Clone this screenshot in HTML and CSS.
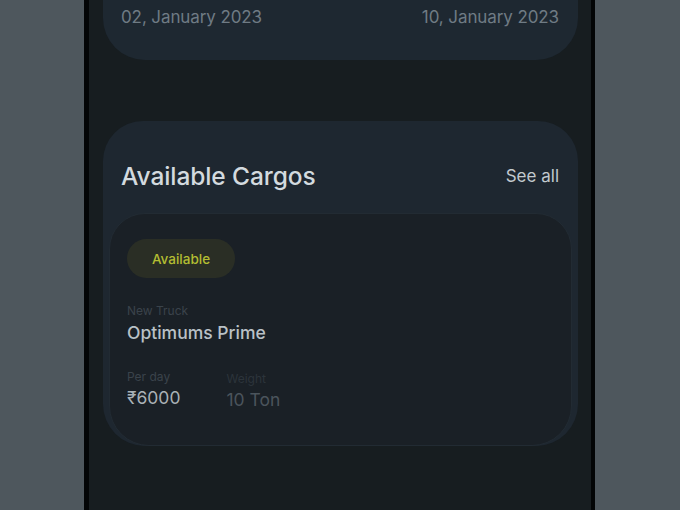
FILE: index.html
```html
<!DOCTYPE html>
<html>
<head>
<meta charset="utf-8">
<link rel="stylesheet" href="styles.css">
</head>
<body>
<div class="stage">
  <div class="phone">
    <div class="screen">
      <div class="dates-card">
        <span class="date">02, January 2023</span>
        <span class="date">10, January 2023</span>
      </div>
      <div class="cargos">
        <div class="cargos-head">
          <h2 class="title">Available Cargos</h2>
          <span class="see-all">See all</span>
        </div>
        <div class="cargo-item">
          <span class="badge">Available</span>
          <div class="field name-field">
            <span class="label">New Truck</span>
            <span class="value name">Optimums Prime</span>
          </div>
          <div class="stats">
            <div class="field">
              <span class="label">Per day</span>
              <span class="value">₹6000</span>
            </div>
            <div class="field dim">
              <span class="label">Weight</span>
              <span class="value">10 Ton</span>
            </div>
          </div>
        </div>
      </div>
    </div>
  </div>
</div>
</body>
</html>
```

FILE: styles.css
```css
* { box-sizing: border-box; margin: 0; padding: 0; }
html, body { width: 680px; height: 510px; overflow: hidden; }
body {
  background: #4e575d;
  font-family: "Inter", "Open Sans", sans-serif;
}
.stage {
  display: flex;
  justify-content: flex-start;
  height: 510px;
  padding-left: 84px;
}
.phone {
  width: 511px;
  height: 510px;
  background: #030506;
  padding: 0 4px 0 5px;
}
.screen {
  height: 510px;
  background: #171d20;
  padding: 0 13px 0 14px;
  display: flex;
  flex-direction: column;
}
.dates-card {
  height: 60px;
  background: #1e2831;
  border-radius: 0 0 42px 42px;
  display: flex;
  justify-content: space-between;
  align-items: flex-start;
  padding: 7px 19px 0 18px;
}
.date {
  font-size: 17px;
  color: #6f7b84;
  letter-spacing: -0.1px;
}
.cargos {
  margin-top: 61px;
  background: #1e2730;
  border-radius: 40px 40px 42px 42px;
  display: flex;
  flex-direction: column;
  height: 325px;
}
.cargos-head {
  display: flex;
  justify-content: space-between;
  padding: 40px 19px 0 18px;
  height: 92px;
  align-items: flex-start;
}
.title {
  font-size: 24.5px;
  font-weight: 500;
  color: #d3dadf;
  letter-spacing: -0.1px;
}
.see-all {
  font-size: 17px;
  color: #c2c9ce;
  margin-top: 5px;
}
.cargo-item {
  flex: 1;
  margin: 0 6px;
  background: #1a2026;
  border: 1px solid #222b33;
  border-radius: 36px 36px 40px 40px;
  padding: 25px 17px 0 17px;
  display: flex;
  flex-direction: column;
}
.badge {
  align-self: flex-start;
  width: 108px;
  height: 39px;
  border-radius: 20px;
  background: #2a2e25;
  color: #b3bd32;
  font-size: 13.5px;
  font-weight: 500;
  display: flex;
  align-items: center;
  justify-content: center;
}
.field {
  display: flex;
  flex-direction: column;
}
.name-field { margin-top: 25px; }
.label {
  font-size: 12px;
  color: #3a434b;
}
.value {
  font-size: 17.5px;
  color: #aab2b7;
  margin-top: 3px;
}
.value.name {
  color: #b9c1c6;
  font-weight: 500;
  margin-top: 4px;
}
.stats {
  display: flex;
  gap: 46px;
  margin-top: 26px;
}
.field.dim { margin-top: 2px; }
.field.dim .label { color: #2c343b; }
.field.dim .value { color: #4b545c; }
```
